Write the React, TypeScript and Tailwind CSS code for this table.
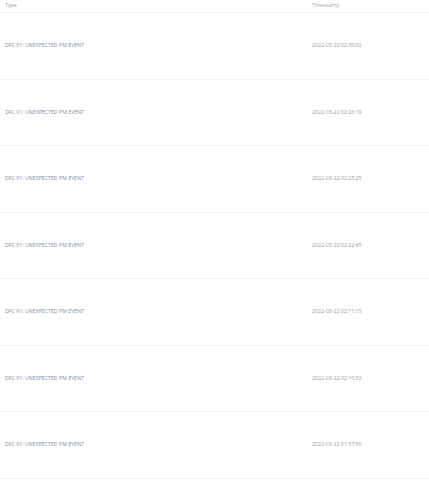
const events = [
  "2022-03-22 02:30:02",
  "2022-03-22 02:26:19",
  "2022-03-22 02:23:25",
  "2022-03-22 02:22:45",
  "2022-03-22 02:11:15",
  "2022-03-22 02:10:32",
  "2022-03-22 01:57:56",
];

export default function App() {
  return (
    <div className="w-[429px] h-[480px] bg-white font-['Open_Sans',sans-serif]">
      <div className="grid grid-cols-[307px_1fr] h-[13px] items-center border-b border-[#eceef1] text-[5.25px] text-[#9aa3ad]">
        <div className="pl-[5px]">Type</div>
        <div className="pl-[5px]">Timestamp</div>
      </div>
      {events.map((ts, idx) => (
        <div
          key={idx}
          className="grid grid-cols-[307px_1fr] h-[66.5px] pt-[1px] items-center border-b border-[#eceef1] text-[5.25px]"
        >
          <div className="pl-[5px] text-[#7e90a6]">DFC 91: UNEXPECTED PM EVENT</div>
          <div className="pl-[5px] text-[#8f99a5]">{ts}</div>
        </div>
      ))}
    </div>
  );
}
